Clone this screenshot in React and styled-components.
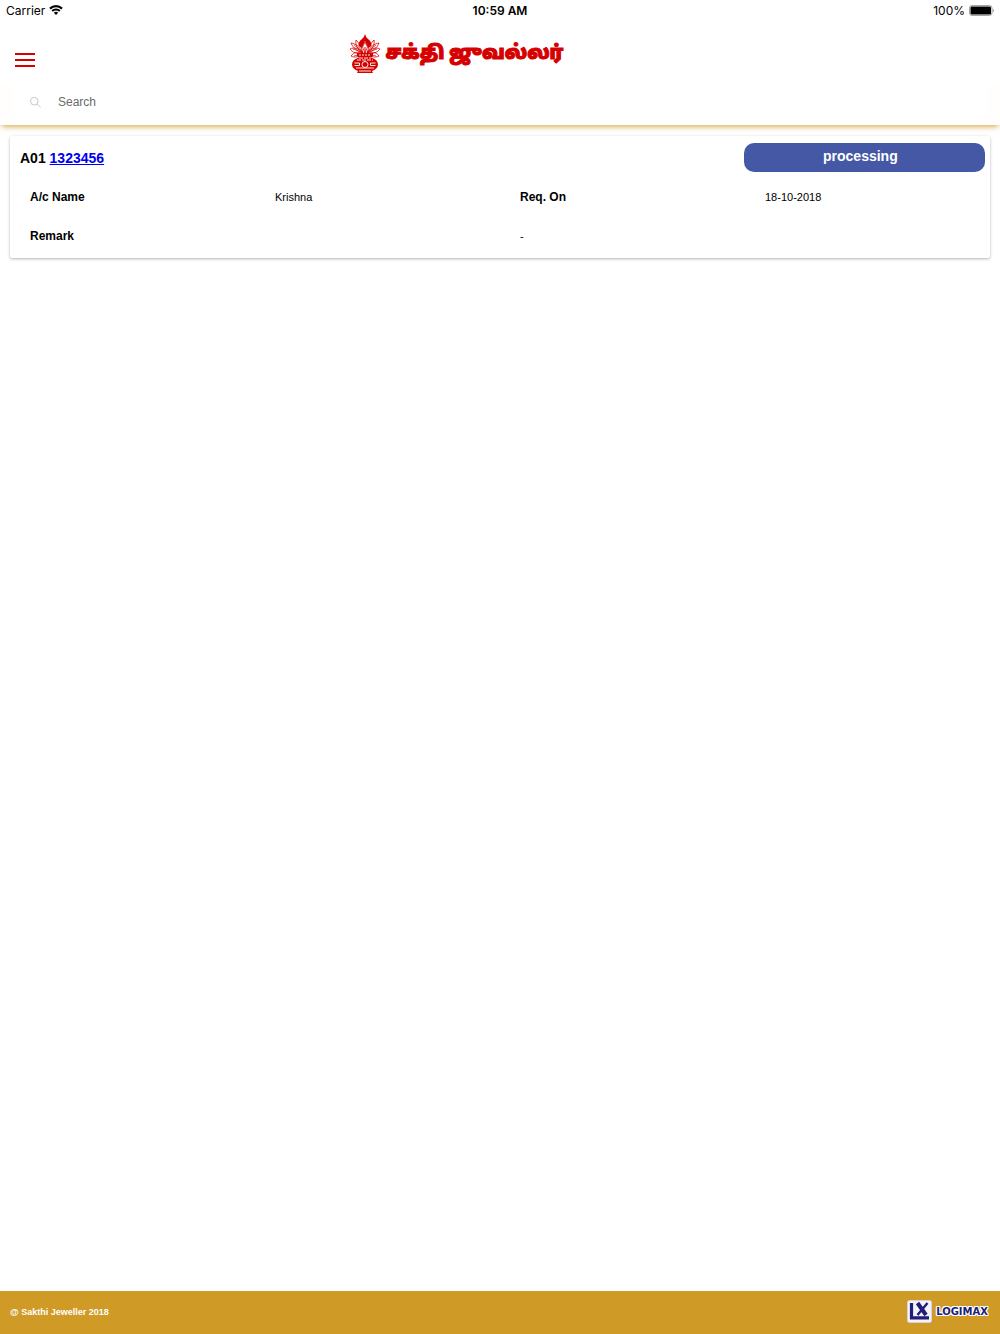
import { useState } from "react";
import styled, { createGlobalStyle } from "styled-components";

const GlobalStyle = createGlobalStyle`
  * {
    box-sizing: border-box;
  }
  body {
    margin: 0;
    background: #fff;
    color: #000;
    font-family: "Liberation Sans", Arial, sans-serif;
    font-size: 12px;
  }
  svg {
    display: block;
    flex: none;
  }
`;

const Page = styled.div`
  display: flex;
  flex-direction: column;
  min-height: 100vh;
`;

const StatusBar = styled.div`
  display: grid;
  grid-template-columns: 1fr auto 1fr;
  align-items: center;
  height: 20px;
  padding: 0 6px;
  background: #fff;
  font-family: Inter, sans-serif;
`;

const StatusGroup = styled.div`
  display: flex;
  align-items: center;
  justify-content: ${({ $end }) => ($end ? "flex-end" : "flex-start")};
  gap: 4px;
`;

const Clock = styled.strong`
  font-weight: 600;
`;

const Header = styled.header`
  background: #fffefc;
  box-shadow: 0 4px 5px -2px rgba(207, 154, 37, 0.75);
`;

const Toolbar = styled.div`
  display: flex;
  align-items: center;
  height: 64px;
  padding: 0 14px;
  background: #fff;
`;

const MenuButton = styled.button`
  padding: 0;
  margin-top: 16px;
  border: 0;
  background: none;
`;

const Brand = styled.h1`
  display: flex;
  flex: 1;
  align-items: center;
  justify-content: center;
  gap: 6px;
  margin: 0;
  padding: 3px 108px 0 0;
  color: #d50000;
  font-family: "Noto Sans Tamil", "Noto Sans", sans-serif;
  font-size: 19px;
  font-weight: 900;
  line-height: 40px;
  white-space: nowrap;
  -webkit-text-stroke: 1px #d50000;
`;

const SearchBar = styled.div`
  padding: 1px 14px 7px;
`;

const SearchField = styled.label`
  display: flex;
  align-items: center;
  gap: 17px;
  height: 33px;
  padding: 0 16px;
  background: #fff;
`;

const SearchInput = styled.input`
  flex: 1;
  padding: 0;
  border: 0;
  outline: 0;
  background: transparent;
  font: 12px "Liberation Sans", Arial, sans-serif;

  &::placeholder {
    color: #6b6b6b;
  }
`;

const Content = styled.main`
  flex: 1;
  padding: 11px 10px;
`;

const Card = styled.article`
  padding: 7px 0 2px;
  border-radius: 2px;
  background: #fff;
  box-shadow: 0 1px 3px rgba(0, 0, 0, 0.3);
`;

const CardHeader = styled.div`
  display: grid;
  grid-template-columns: 3fr 1fr;
  align-items: center;
  padding: 0 5px 0 10px;
`;

const CardTitle = styled.h2`
  margin: 0;
  font-size: 14px;
`;

const AccountLink = styled.a`
  color: #0000ee;
`;

const Status = styled.strong`
  height: 29px;
  padding-right: 8px;
  border-radius: 10px;
  background: #4558a6;
  color: #fff;
  font-size: 14px;
  line-height: 26px;
  text-align: center;
`;

const Details = styled.dl`
  display: grid;
  grid-template-columns: repeat(4, 1fr);
  margin: 0;
  padding-top: 6px;
  line-height: 39px;
`;

const Term = styled.dt`
  grid-column: span ${({ $wide }) => ($wide ? 2 : 1)};
  padding-left: 20px;
  font-weight: bold;
`;

const Value = styled.dd`
  grid-column: span ${({ $wide }) => ($wide ? 2 : 1)};
  margin: 0;
  padding-left: 20px;
  font-size: 11px;
`;

const Footer = styled.footer`
  display: flex;
  align-items: center;
  justify-content: space-between;
  height: 43px;
  padding: 0 12px 2px 10px;
  background: #cf9a25;
  color: #fff;
  font-size: 9px;
  font-weight: bold;
`;

const Logimax = styled.div`
  display: flex;
  align-items: center;
  gap: 4px;
  color: #211d78;
  font-family: "DejaVu Sans", sans-serif;
  font-size: 10px;
  text-shadow: 1px 0 #fff, -1px 0 #fff, 0 1px #fff, 0 -1px #fff,
    1px 1px #fff, -1px 1px #fff, 1px -1px #fff, -1px -1px #fff;
`;

const WifiIcon = () => (
  <svg width="14" height="10" viewBox="0 0 14 10" fill="none" stroke="#000">
    <path d="M1 3.6a8.7 8.7 0 0 1 12 0" strokeWidth="2.2" />
    <path d="M3.2 6a5.4 5.4 0 0 1 7.6 0" strokeWidth="2" />
    <path d="M7 10 4.9 7.8a3 3 0 0 1 4.2 0Z" fill="#000" stroke="none" />
  </svg>
);

const BatteryIcon = () => (
  <svg width="25" height="11" viewBox="0 0 25 11">
    <rect x=".5" y=".5" width="22.5" height="10" rx="2.5" fill="#fff" stroke="#a5a5a5" />
    <rect x="1.5" y="1.5" width="20.500" height="8" rx="1.2" />
    <path d="M23.800 3.7q1.200.6 1.200 1.8t-1.200 1.8Z" fill="#999" />
  </svg>
);

const MenuIcon = () => (
  <svg width="21" height="16" viewBox="0 0 21 16" fill="#d50000">
    <path d="M1 1h20v2H1zM1 7h20v2H1zM1 13h20v2H1z" />
  </svg>
);

const SearchIcon = () => (
  <svg width="11" height="12" viewBox="0 0 11 12" fill="none" stroke="#c8c8c8">
    <circle cx="4.3" cy="5.2" r="3.8" />
    <path d="m7 8 3.7 3.5" />
  </svg>
);

// Kalasam: pot with mango leaves and a coconut on top
const KalasamIcon = () => (
  <svg width="30" height="40" viewBox="0 0 30 40" fill="none" stroke="#d50000">
    <path
      d="M13 19C9 12 6 10 1 9c2 5 6 8 12 10ZM13 19C8 14 4 13 0 15c3 4 7 5 13 4ZM13 20C8 17 4 18 1 22c4 2 8 1 12-2ZM13 19C11 12 9 9 6 6c-1 5 2 10 7 13ZM17 19c4-7 7-9 12-10-2 5-6 8-12 10ZM17 19c5-5 9-6 13-4-3 4-7 5-13 4ZM17 20c5-3 9-2 12 2-4 2-8 1-12-2ZM17 19c2-7 4-10 7-13 1 5-2 10-7 13Z"
      fill="#fff"
      strokeWidth=".8"
    />
    <path d="M13 18 4 11M12 18 3 15M17 18l9-7M18 18l9-3M12 20l-8 2M18 20l8 2" strokeWidth=".7" />
    <path d="M15 0q.6 3 3 5 4 3 3.500 7L18 14l-3-7-3 7-3.500-2Q8 8 12 5q2.400-2 3-5Z" fill="#d50000" stroke="none" />
    <path d="m15 8-2.500 5 2.500 6 2.500-6Z" fill="#fff" strokeWidth=".8" />
    <path d="M15 13v6" />
    <path d="M7 19h16v3l-2 1.500q7 2 7 7 0 4-6 6.500l1 2H7l1-2q-6-2.500-6-6.500 0-5 7-7L7 22Z" fill="#d50000" stroke="none" />
    <g stroke="#fff" strokeWidth=".9">
      <path d="M9 21h12" strokeDasharray="2 1" />
      <path d="M9 24h12M7 26h16" strokeDasharray="4 1" />
      <circle cx="15" cy="30.500" r="3" />
      <path d="M4.500 29h5v2.500h-5M25.500 29h-5v2.500h5M6 34h18M9 37h12" />
    </g>
  </svg>
);

const LogimaxIcon = () => (
  <svg width="25" height="23" viewBox="0 0 25 23" fill="none" stroke="#211d78">
    <rect x=".5" y=".5" width="24" height="22" rx="2" fill="#f4f3f8" stroke="#d5d2df" />
    <path d="M4.500 3v14.800H22" strokeWidth="3.200" />
    <path d="m10.500 3 8.500 12" strokeWidth="4" />
    <path d="m20.500 3-10 12" strokeWidth="2.400" />
  </svg>
);

const requests = [
  {
    code: "A01",
    account: "1323456",
    name: "Krishna",
    date: "18-10-2018",
    remark: "-",
    status: "processing",
  },
];

const RequestCard = ({ request }) => (
  <Card>
    <CardHeader>
      <CardTitle>
        {request.code} <AccountLink href="#">{request.account}</AccountLink>
      </CardTitle>
      <Status>{request.status}</Status>
    </CardHeader>
    <Details>
      <Term>A/c Name</Term>
      <Value>{request.name}</Value>
      <Term>Req. On</Term>
      <Value>{request.date}</Value>
      <Term $wide>Remark</Term>
      <Value $wide>{request.remark}</Value>
    </Details>
  </Card>
);

const App = () => {
  const [search, setSearch] = useState("");

  const visible = requests.filter((r) =>
    `${r.code} ${r.account} ${r.name}`
      .toLowerCase()
      .includes(search.toLowerCase())
  );

  return (
    <Page>
      <GlobalStyle />
      <Header>
        <StatusBar>
          <StatusGroup>
            Carrier <WifiIcon />
          </StatusGroup>
          <Clock>10:59 AM</Clock>
          <StatusGroup $end>
            100% <BatteryIcon />
          </StatusGroup>
        </StatusBar>
        <Toolbar>
          <MenuButton aria-label="Menu">
            <MenuIcon />
          </MenuButton>
          <Brand>
            <KalasamIcon />
            சக்தி ஜுவல்லர்
          </Brand>
        </Toolbar>
        <SearchBar>
          <SearchField>
            <SearchIcon />
            <SearchInput
              type="search"
              aria-label="Search"
              placeholder="Search"
              value={search}
              onChange={(e) => setSearch(e.target.value)}
            />
          </SearchField>
        </SearchBar>
      </Header>
      <Content>
        {visible.map((request) => (
          <RequestCard key={request.account} request={request} />
        ))}
      </Content>
      <Footer>
        <span>@ Sakthi Jeweller 2018</span>
        <Logimax>
          <LogimaxIcon />
          LOGIMAX
        </Logimax>
      </Footer>
    </Page>
  );
};

export default App;
